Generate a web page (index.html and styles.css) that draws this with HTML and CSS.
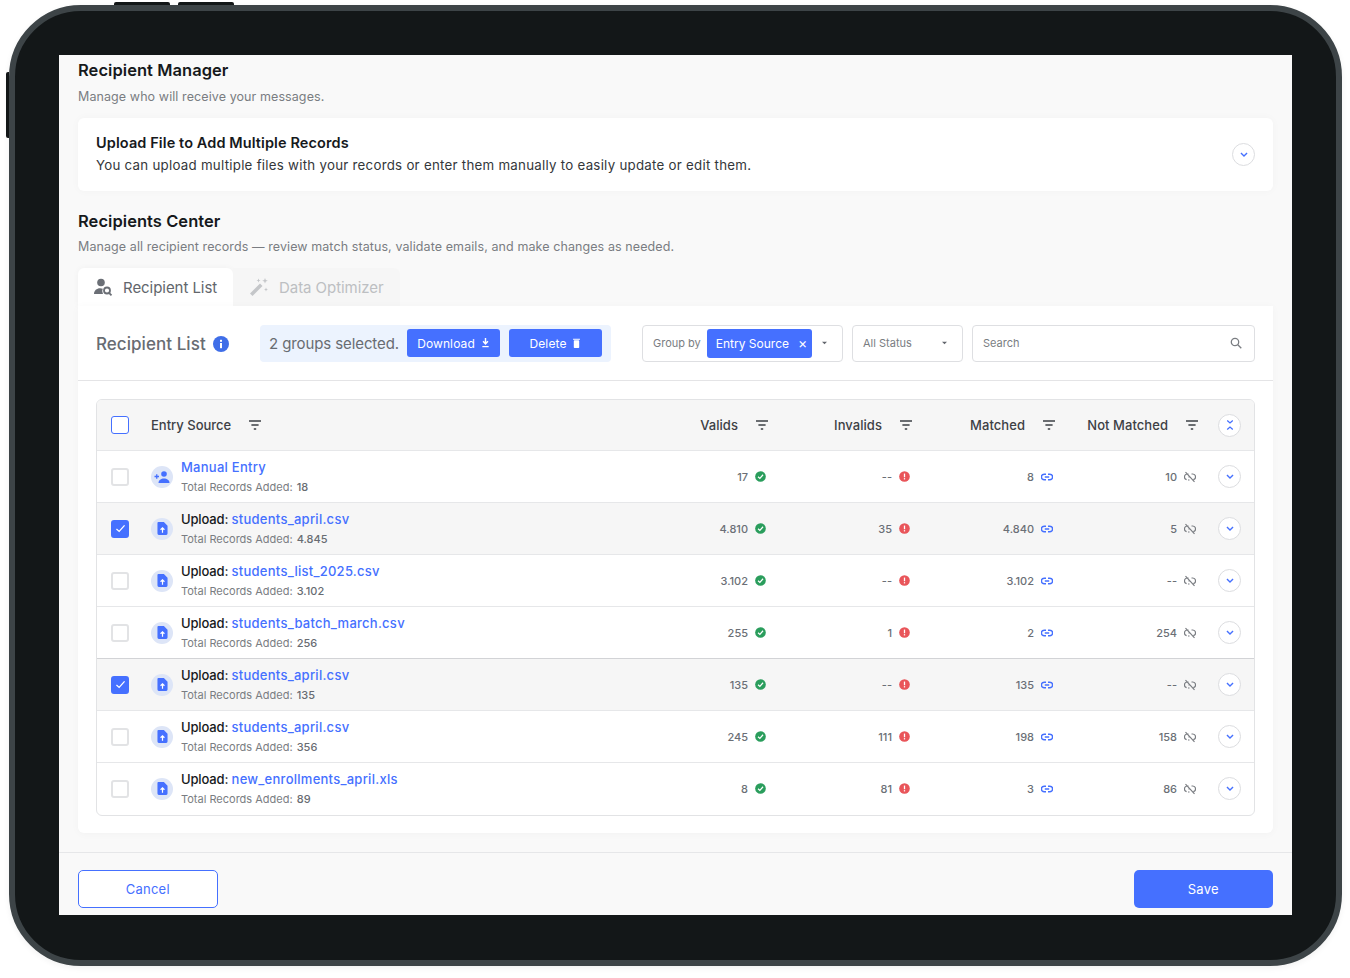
FILE: index.html
```html
<!DOCTYPE html>
<html lang="en">
<head>
<meta charset="utf-8">
<title>Recipient Manager</title>
<link rel="stylesheet" href="styles.css">
</head>
<body>
<svg class="defs" width="0" height="0" aria-hidden="true">
  <symbol id="filter" viewBox="0 0 12 10"><path d="M0 1h12M2.400 5h7.200M4.800 9h2.400" fill="none" stroke="currentColor" stroke-width="1.400"/></symbol>
  <symbol id="down" viewBox="0 0 10 6"><path d="M1.200 1 5 4.800 8.800 1" fill="none" stroke="currentColor" stroke-width="1.700"/></symbol>
  <symbol id="ok" viewBox="0 0 12 12"><circle cx="6" cy="6" r="5.800" fill="#2a9d5c"/><path d="M3.300 6.200 5.300 8l3.500-3.900" fill="none" stroke="#fff" stroke-width="1.300"/></symbol>
  <symbol id="bad" viewBox="0 0 12 12"><circle cx="6" cy="6" r="5.800" fill="#e9555a"/><rect x="5.300" y="2.800" width="1.400" height="4" fill="#fff"/><rect x="5.300" y="7.800" width="1.400" height="1.400" fill="#fff"/></symbol>
  <symbol id="link" viewBox="0 0 12 8"><path d="M5 1.200H3.200a2.800 2.800 0 0 0 0 5.600H5M7 1.200h1.800a2.800 2.800 0 0 1 0 5.600H7M3.800 4h4.400" fill="none" stroke="currentColor" stroke-width="1.400"/></symbol>
  <symbol id="unlink" viewBox="0 0 12 12"><path d="M4.500 3H3.200a2.900 2.900 0 0 0-.6 5.700M4 9h1.500M7.500 3h1.300a2.900 2.900 0 0 1 .6 5.700M4.500 6H6M1.500 1.200l9 9.600" fill="none" stroke="currentColor" stroke-width="1.200"/></symbol>
  <symbol id="file" viewBox="0 0 12 14"><path d="M1.500 0H7.500L11.500 4V12.500A1.500 1.500 0 0 1 10 14H2A1.500 1.500 0 0 1 .5 12.500V1A1 1 0 0 1 1.500 0Z" fill="#4570ff"/><path d="M6 11.500V6.500M3.900 8.400 6 6.200 8.100 8.400" fill="none" stroke="#fff" stroke-width="1.300"/></symbol>
  <symbol id="useradd" viewBox="0 0 16 12"><circle cx="10" cy="3" r="2.800" fill="#4570ff"/><path d="M4.500 12c0-3 2.600-4.600 5.500-4.600s5.500 1.600 5.500 4.600Z" fill="#4570ff"/><path d="M.5 5.500H5M2.750 3.250v4.500" stroke="#4570ff" stroke-width="1.300"/></symbol>
  <symbol id="caret" viewBox="0 0 6 4"><path d="M0 .5h6L3 3.500Z" fill="currentColor"/></symbol>
</svg>

<main class="device">
  <span class="hw hw-top-a"></span>
  <span class="hw hw-top-b"></span>
  <span class="hw hw-left"></span>
  <div class="screen">
    <div class="content">
      <h1 class="title">Recipient Manager</h1>
      <p class="subtitle">Manage who will receive your messages.</p>

      <section class="upload-card">
        <div class="upload-text">
          <h2 class="upload-title">Upload File to Add Multiple Records</h2>
          <p class="upload-desc">You can upload multiple files with your records or enter them manually to easily update or edit them.</p>
        </div>
        <span class="round"><svg class="chev"><use href="#down"/></svg></span>
      </section>

      <h1 class="title title-second">Recipients Center</h1>
      <p class="subtitle">Manage all recipient records — review match status, validate emails, and make changes as needed.</p>

      <div class="tabs">
        <div class="tab tab-active">
          <svg class="tab-icon" viewBox="0 0 20 18"><circle cx="8" cy="4.500" r="3.800" fill="#6b6f76"/><path d="M1 16c0-3.500 2.800-5.800 6-5.800 1 0 2 .2 2.800.6a5 5 0 0 0 .2 5.200Z" fill="#6b6f76"/><circle cx="14" cy="12.500" r="3" fill="none" stroke="#6b6f76" stroke-width="1.800"/><path d="m16 14.800 2.500 2.500" stroke="#6b6f76" stroke-width="1.800"/></svg>
          <span>Recipient List</span>
        </div>
        <div class="tab tab-idle">
          <svg class="tab-icon" viewBox="0 0 20 20"><path d="M1 16.500 11 6.500l2.500 2.500-10 10Z" fill="#c4c6c9"/><path d="M9.500 1.500l.6 1.400 1.400.6-1.400.6-.6 1.400-.6-1.400-1.400-.6 1.400-.6ZM16 1l.8 2 2 .8-2 .8-.8 2-.8-2-2-.8 2-.8ZM17 10.500l.6 1.400 1.400.6-1.400.6-.6 1.400-.6-1.400-1.400-.6 1.400-.6Z" fill="#c4c6c9"/></svg>
          <span>Data Optimizer</span>
        </div>
      </div>

      <section class="panel">
        <div class="toolbar">
          <div class="panel-name">
            <span>Recipient List</span>
            <svg class="info" viewBox="0 0 16 16"><circle cx="8" cy="8" r="8" fill="#3f6ee8"/><rect x="7" y="7" width="2" height="5.200" fill="#fff"/><rect x="7" y="3.800" width="2" height="2" fill="#fff"/></svg>
          </div>
          <div class="selection">
            <span class="selection-text">2 groups selected.</span>
            <button class="btn-small">Download
              <svg class="btn-icon" viewBox="0 0 10 11"><path d="M5 0v5.500M2.300 3.500 5 6.500l2.700-3" fill="none" stroke="#fff" stroke-width="1.600"/><rect x="1.500" y="8.800" width="7" height="1.400" fill="#fff"/></svg>
            </button>
            <button class="btn-small">Delete
              <svg class="btn-icon" viewBox="0 0 10 11"><rect x="2" y="2.500" width="6" height="8.500" rx=".8" fill="#fff"/><rect x="1.200" y=".8" width="7.600" height="1.100" fill="#fff"/></svg>
            </button>
          </div>
          <div class="control group-by">
            <span>Group by</span>
            <span class="chip">Entry Source <span class="chip-x">×</span></span>
            <svg class="caret"><use href="#caret"/></svg>
          </div>
          <div class="control status">
            <span>All Status</span>
            <svg class="caret"><use href="#caret"/></svg>
          </div>
          <div class="control search">
            <span>Search</span>
            <svg class="search-icon" viewBox="0 0 12 12"><circle cx="5" cy="5" r="3.700" fill="none" stroke="currentColor" stroke-width="1.300"/><path d="m7.800 7.800 3.500 3.500" stroke="currentColor" stroke-width="1.300"/></svg>
          </div>
        </div>

        <div class="table">
          <div class="row head">
            <span class="check check-head"></span>
            <div class="head-source"><span>Entry Source</span><svg class="filter"><use href="#filter"/></svg></div>
            <div class="head-cell"><span>Valids</span><svg class="filter"><use href="#filter"/></svg></div>
            <div class="head-cell"><span>Invalids</span><svg class="filter"><use href="#filter"/></svg></div>
            <div class="head-cell"><span>Matched</span><svg class="filter"><use href="#filter"/></svg></div>
            <div class="head-cell"><span>Not Matched</span><svg class="filter"><use href="#filter"/></svg></div>
            <span class="round"><svg class="chev-all" viewBox="0 0 8 12"><path d="M1.200 1.500 4 4l2.800-2.500M1.200 10.500 4 8l2.800 2.500" fill="none" stroke="#4570ff" stroke-width="1.300"/></svg></span>
          </div>

          <div class="row">
            <span class="check"></span>
            <div class="source"><span class="avatar"><svg class="avatar-user"><use href="#useradd"/></svg></span><div><div class="name"><a>Manual Entry</a></div><div class="records">Total Records Added: <b>18</b></div></div></div>
            <div class="num">17<svg class="ico"><use href="#ok"/></svg></div>
            <div class="num">--<svg class="ico"><use href="#bad"/></svg></div>
            <div class="num">8<svg class="ico ico-link"><use href="#link"/></svg></div>
            <div class="num">10<svg class="ico ico-unlink"><use href="#unlink"/></svg></div>
            <span class="round"><svg class="chev"><use href="#down"/></svg></span>
          </div>

          <div class="row selected">
            <span class="check checked"><svg viewBox="0 0 12 10"><path d="M1.500 5.500 4.500 8.300l6-6.800" fill="none" stroke="#fff" stroke-width="1.400"/></svg></span>
            <div class="source"><span class="avatar"><svg class="avatar-file"><use href="#file"/></svg></span><div><div class="name">Upload: <a>students_april.csv</a></div><div class="records">Total Records Added: <b>4.845</b></div></div></div>
            <div class="num">4.810<svg class="ico"><use href="#ok"/></svg></div>
            <div class="num">35<svg class="ico"><use href="#bad"/></svg></div>
            <div class="num">4.840<svg class="ico ico-link"><use href="#link"/></svg></div>
            <div class="num">5<svg class="ico ico-unlink"><use href="#unlink"/></svg></div>
            <span class="round"><svg class="chev"><use href="#down"/></svg></span>
          </div>

          <div class="row">
            <span class="check"></span>
            <div class="source"><span class="avatar"><svg class="avatar-file"><use href="#file"/></svg></span><div><div class="name">Upload: <a>students_list_2025.csv</a></div><div class="records">Total Records Added: <b>3.102</b></div></div></div>
            <div class="num">3.102<svg class="ico"><use href="#ok"/></svg></div>
            <div class="num">--<svg class="ico"><use href="#bad"/></svg></div>
            <div class="num">3.102<svg class="ico ico-link"><use href="#link"/></svg></div>
            <div class="num">--<svg class="ico ico-unlink"><use href="#unlink"/></svg></div>
            <span class="round"><svg class="chev"><use href="#down"/></svg></span>
          </div>

          <div class="row row-before-strong">
            <span class="check"></span>
            <div class="source"><span class="avatar"><svg class="avatar-file"><use href="#file"/></svg></span><div><div class="name">Upload: <a>students_batch_march.csv</a></div><div class="records">Total Records Added: <b>256</b></div></div></div>
            <div class="num">255<svg class="ico"><use href="#ok"/></svg></div>
            <div class="num">1<svg class="ico"><use href="#bad"/></svg></div>
            <div class="num">2<svg class="ico ico-link"><use href="#link"/></svg></div>
            <div class="num">254<svg class="ico ico-unlink"><use href="#unlink"/></svg></div>
            <span class="round"><svg class="chev"><use href="#down"/></svg></span>
          </div>

          <div class="row selected">
            <span class="check checked"><svg viewBox="0 0 12 10"><path d="M1.500 5.500 4.500 8.300l6-6.800" fill="none" stroke="#fff" stroke-width="1.400"/></svg></span>
            <div class="source"><span class="avatar"><svg class="avatar-file"><use href="#file"/></svg></span><div><div class="name">Upload: <a>students_april.csv</a></div><div class="records">Total Records Added: <b>135</b></div></div></div>
            <div class="num">135<svg class="ico"><use href="#ok"/></svg></div>
            <div class="num">--<svg class="ico"><use href="#bad"/></svg></div>
            <div class="num">135<svg class="ico ico-link"><use href="#link"/></svg></div>
            <div class="num">--<svg class="ico ico-unlink"><use href="#unlink"/></svg></div>
            <span class="round"><svg class="chev"><use href="#down"/></svg></span>
          </div>

          <div class="row">
            <span class="check"></span>
            <div class="source"><span class="avatar"><svg class="avatar-file"><use href="#file"/></svg></span><div><div class="name">Upload: <a>students_april.csv</a></div><div class="records">Total Records Added: <b>356</b></div></div></div>
            <div class="num">245<svg class="ico"><use href="#ok"/></svg></div>
            <div class="num">111<svg class="ico"><use href="#bad"/></svg></div>
            <div class="num">198<svg class="ico ico-link"><use href="#link"/></svg></div>
            <div class="num">158<svg class="ico ico-unlink"><use href="#unlink"/></svg></div>
            <span class="round"><svg class="chev"><use href="#down"/></svg></span>
          </div>

          <div class="row row-last">
            <span class="check"></span>
            <div class="source"><span class="avatar"><svg class="avatar-file"><use href="#file"/></svg></span><div><div class="name">Upload: <a>new_enrollments_april.xls</a></div><div class="records">Total Records Added: <b>89</b></div></div></div>
            <div class="num">8<svg class="ico"><use href="#ok"/></svg></div>
            <div class="num">81<svg class="ico"><use href="#bad"/></svg></div>
            <div class="num">3<svg class="ico ico-link"><use href="#link"/></svg></div>
            <div class="num">86<svg class="ico ico-unlink"><use href="#unlink"/></svg></div>
            <span class="round"><svg class="chev"><use href="#down"/></svg></span>
          </div>
        </div>
      </section>
    </div>

    <footer class="footer">
      <button class="btn btn-cancel">Cancel</button>
      <button class="btn btn-save">Save</button>
    </footer>
  </div>
</main>
</body>
</html>
```

FILE: styles.css
```css
* { box-sizing: border-box; }
html, body { margin: 0; padding: 0; }
body {
  background: #fff;
  font-family: Inter, "Noto Sans", "Liberation Sans", sans-serif;
  color: #16191c;
  height: 978px;
  overflow: hidden;
}
h1, h2, p { margin: 0; }
.defs { position: absolute; }

.device {
  position: relative;
  width: 1333px;
  height: 961px;
  margin: 5px 0 0 9px;
  padding: 44px;
  background: #131718;
  border: 6px solid #3d4447;
  border-radius: 72px;
  box-shadow: 0 2px 6px rgba(0, 0, 0, .06);
}
.hw { position: absolute; background: #131718; }
.hw-top-a { top: -9px; left: 99px; width: 56px; height: 3px; border-radius: 2px 2px 0 0; }
.hw-top-b { top: -9px; left: 163px; width: 56px; height: 3px; border-radius: 2px 2px 0 0; }
.hw-left { top: 61px; left: -9px; width: 3px; height: 66px; border-radius: 2px 0 0 2px; }

.screen {
  height: 860px;
  background: #f9f9f9;
  overflow: hidden;
  display: flex;
  flex-direction: column;
}
.content { padding: 5px 19px 0; flex: 1; }

.title { font-size: 16.500px; line-height: 20px; font-weight: 600; letter-spacing: .05px; }
.title-second { margin-top: 20px; }
.subtitle { margin-top: 7px; font-size: 12.500px; line-height: 20px; color: #7a7d82; letter-spacing: .09px; }
.title-second + .subtitle { margin-top: 6px; }

.upload-card {
  margin-top: 11px;
  height: 73px;
  background: #fff;
  border-radius: 6px;
  box-shadow: 0 0 8px rgba(0, 0, 0, .03);
  padding: 0 19px 0 18px;
  display: flex;
  align-items: center;
  justify-content: space-between;
}
.upload-text { margin-bottom: 2px; }
.upload-title { font-size: 14.500px; line-height: 20px; font-weight: 600; letter-spacing: .1px; }
.upload-desc { margin-top: 2px; font-size: 13.300px; line-height: 20px; color: #34373b; letter-spacing: .26px; }
.upload-card .round { margin-right: -1px; }

.round {
  width: 23px;
  height: 23px;
  flex: none;
  border: 1px solid #dcdde0;
  border-radius: 50%;
  background: #fff;
  display: flex;
  align-items: center;
  justify-content: center;
}
.chev { width: 8px; height: 5px; color: #4570ff; }

.tabs { margin-top: 11px; height: 38px; display: flex; }
.tab {
  height: 38px;
  display: flex;
  align-items: center;
  gap: 10px;
  font-size: 15px;
  letter-spacing: -.05px;
}
.tab-icon { width: 20px; height: 20px; }
.tab-active { width: 155px; padding-left: 15px; background: #fff; color: #62666c; border-radius: 6px 6px 0 0; box-shadow: 0 0 6px rgba(0, 0, 0, .04); }
.tab-idle { width: 167px; padding-left: 16px; color: #bdbfc2; background: #f6f6f6; border-radius: 0 6px 0 0; }

.panel {
  position: relative;
  background: #fff;
  border-radius: 0 0 6px 6px;
  box-shadow: 0 1px 8px rgba(0, 0, 0, .03);
  padding-bottom: 17px;
}
.toolbar {
  height: 75px;
  padding: 0 18px;
  border-bottom: 1px solid #e4e4e6;
  display: flex;
  align-items: center;
}
.panel-name {
  width: 164px;
  flex: none;
  display: flex;
  align-items: center;
  gap: 7px;
  font-size: 17px;
  font-weight: 500;
  color: #686c72;
  letter-spacing: .05px;
  padding-top: 2px;
}
.info { width: 16px; height: 16px; }
.selection {
  width: 351px;
  flex: none;
  height: 37px;
  background: #ecf3fe;
  border-radius: 4px;
  padding: 0 9px;
  display: flex;
  align-items: center;
}
.selection-text { width: 138px; flex: none; font-size: 15px; color: #686c72; letter-spacing: -.1px; white-space: nowrap; }
.btn-small {
  width: 93px;
  flex: none;
  height: 28px;
  border: 0;
  border-radius: 3px;
  background: #4570ff;
  color: #fff;
  font: inherit;
  font-size: 12px;
  letter-spacing: .1px;
  display: flex;
  align-items: center;
  justify-content: center;
  gap: 6px;
}
.btn-small + .btn-small { margin-left: 9px; }
.btn-icon { width: 9px; height: 10px; }
.control {
  height: 37px;
  margin-left: 9px;
  background: #fff;
  border: 1px solid #dedfe2;
  border-radius: 4px;
  padding: 0 10px;
  display: flex;
  align-items: center;
  font-size: 11px;
  color: #7a7d82;
}
.group-by { width: 201px; flex: none; margin-left: 31px; gap: 6px; }
.group-by .caret { margin-left: 4px; }
.chip {
  width: 105px;
  height: 29px;
  background: #4570ff;
  color: #fff;
  border-radius: 3px;
  padding-left: 9px;
  display: flex;
  align-items: center;
  gap: 9px;
  font-size: 12px;
  white-space: nowrap;
}
.chip-x { font-size: 14px; line-height: 1; }
.caret { width: 5px; height: 4px; color: #62666c; margin-left: 7px; }
.status { width: 111px; flex: none; justify-content: space-between; padding-right: 15px; }
.search { flex: 1; justify-content: space-between; padding-right: 12px; }
.search-icon { width: 12px; height: 12px; color: #7a7d82; }

.table {
  margin: 18px 18px 0;
  border: 1px solid #e2e3e5;
  border-radius: 6px;
  overflow: hidden;
}
.row {
  display: grid;
  grid-template-columns: 54px 1fr 143px 144px 143px 143px 57px;
  align-items: center;
  height: 52px;
  border-bottom: 1px solid #e6e7e9;
}
.row-last { border-bottom-color: transparent; }
.row-before-strong { border-bottom-color: #d2d3d6; }
.selected { background: #f6f6f6; }
.head { background: #f6f6f6; height: 51px; }
.check {
  width: 18px;
  height: 18px;
  margin-left: 14px;
  border: 2px solid #e2e3e5;
  border-radius: 3px;
  background: #fff;
  display: flex;
  align-items: center;
  justify-content: center;
}
.check-head { border-color: #4570ff; border-width: 1.500px; }
.checked { background: #4570ff; border-color: #4570ff; }
.checked svg { width: 11px; height: 9px; }
.head-source { display: flex; align-items: center; gap: 18px; font-size: 13px; font-weight: 500; color: #3d4045; }
.head-cell { display: flex; align-items: center; justify-content: flex-end; gap: 18px; margin-right: -1px; font-size: 13px; font-weight: 500; color: #3d4045; letter-spacing: .05px; }
.filter { width: 12px; height: 10px; color: #3d4045; }
.chev-all { width: 8px; height: 12px; }
.source { display: flex; align-items: center; gap: 8px; }
.avatar {
  width: 22px;
  height: 22px;
  flex: none;
  border-radius: 50%;
  background: #dde5f7;
  display: flex;
  align-items: center;
  justify-content: center;
}
.avatar-user { width: 16px; height: 12px; }
.avatar-file { width: 11px; height: 13px; }
.name { font-size: 13px; line-height: 16px; font-weight: 500; color: #16191c; letter-spacing: -.15px; }
.name a { color: #4570ff; letter-spacing: .26px; }
.records { margin-top: 4px; font-size: 11px; line-height: 16px; color: #7a7d82; }
.records b { font-weight: 500; color: #686c72; margin-left: 1px; }
.num {
  display: flex;
  align-items: center;
  justify-content: flex-end;
  gap: 6.500px;
  padding-right: 1.500px;
  font-size: 11px;
  font-weight: 500;
  color: #6b6f76;
}
.ico { width: 11px; height: 11px; }
.ico-link { width: 12px; height: 8px; color: #4570ff; }
.ico-unlink { width: 12px; height: 12px; color: #7a7d82; }
.row > .round { margin-left: 21px; }

.footer {
  margin-top: 19px;
  border-top: 1px solid #e6e7e9;
  padding: 17px 19px 7px;
  display: flex;
  justify-content: space-between;
}
.btn {
  width: 139.500px;
  height: 38px;
  border-radius: 5px;
  font: inherit;
  font-size: 13px;
  letter-spacing: .25px;
}
.btn-cancel { background: #fff; border: 1px solid #4570ff; color: #4570ff; }
.btn-save { background: #4570ff; border: 0; color: #fff; }
```
